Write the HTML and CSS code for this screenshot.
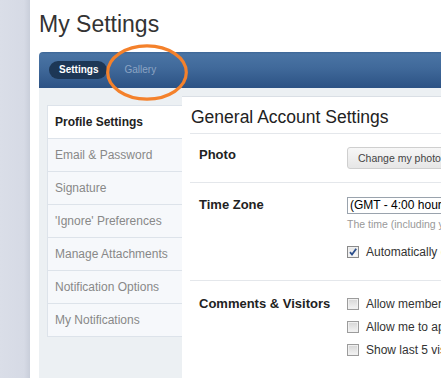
FILE: index.html
```html
<!DOCTYPE html>
<html>
<head>
<meta charset="utf-8">
<link rel="stylesheet" href="styles.css">
</head>
<body>
<div class="wrap">
  <div class="strip"></div>
  <div class="page">
    <h1 class="title">My Settings</h1>
    <div class="tabbar">
      <span class="tab active">Settings</span>
      <span class="tab">Gallery</span>
    </div>
    <div class="content">
      <div class="sidebar">
        <ul class="menu">
          <li class="item current">Profile Settings</li>
          <li class="item">Email &amp; Password</li>
          <li class="item">Signature</li>
          <li class="item">'Ignore' Preferences</li>
          <li class="item">Manage Attachments</li>
          <li class="item">Notification Options</li>
          <li class="item">My Notifications</li>
        </ul>
      </div>
      <div class="main">
        <h2 class="heading">General Account Settings</h2>
        <div class="row photo-row">
          <div class="label">Photo</div>
          <div class="field">
            <span class="button">Change my photo</span>
          </div>
        </div>
        <div class="row tz-row">
          <div class="label">Time Zone</div>
          <div class="field">
            <div class="select">(GMT - 4:00 hours) Atlantic Time (Canada), Caracas, La Paz</div>
            <div class="hint">The time (including your offset) is now shown</div>
            <div class="check first"><span class="box checked"><svg viewBox="0 0 12 12" width="12" height="12"><path d="M3 6.2 L5 8.6 L9.2 2.8" fill="none" stroke="#2c4f8c" stroke-width="1.8"/></svg></span>Automatically detect DST settings</div>
          </div>
        </div>
        <div class="row cv-row">
          <div class="label">Comments &amp; Visitors</div>
          <div class="field list">
            <div class="check"><span class="box"></span>Allow members to post comments on my profile</div>
            <div class="check"><span class="box"></span>Allow me to appear in the 'Recent Visitors' list</div>
            <div class="check"><span class="box"></span>Show last 5 visitors on my profile</div>
          </div>
        </div>
      </div>
    </div>
  </div>
</div>
<svg class="circle" width="90" height="64" viewBox="0 0 90 64">
  <ellipse cx="43" cy="30.5" rx="39.3" ry="26.6" fill="none" stroke="#f4812b" stroke-width="3.2"/>
</svg>
</body>
</html>
```

FILE: styles.css
```css
html, body {
  margin: 0;
  padding: 0;
  height: 378px;
  overflow: hidden;
  background: #fff;
  font-family: "Liberation Sans", Arial, sans-serif;
}
.wrap {
  display: flex;
  height: 378px;
}
.strip {
  width: 30px;
  flex: none;
  background: linear-gradient(to right, #dadee8 0, #d6dae5 80%, #c9ceda 100%);
}
.page {
  flex: 1;
  min-width: 0;
  padding-left: 9px;
  display: flex;
  flex-direction: column;
}
.title {
  margin: 0 0 14px 0;
  padding-top: 10px;
  font-size: 23px;
  line-height: 28px;
  font-weight: normal;
  color: #333;
  white-space: nowrap;
}
.tabbar {
  height: 36px;
  box-sizing: border-box;
  border-top-left-radius: 4px;
  background: linear-gradient(to bottom, #3d6696 0, #4a74a4 6%, #40699a 45%, #2c5284 100%);
  display: flex;
  align-items: center;
  padding-left: 10px;
  gap: 7px;
  flex: none;
}
.tab {
  font-size: 10px;
  line-height: 18px;
  height: 18px;
  padding: 0 9px 0 10px;
  color: #8ca4c3;
  white-space: nowrap;
}
.tab.active {
  background: #1d3756;
  color: #fff;
  font-weight: bold;
  border-radius: 9px;
  padding: 0 9px 0 10px;
}
.content {
  flex: 1;
  display: flex;
  background: #ecf0f3;
  padding-top: 8px;
}
.sidebar {
  width: 143px;
  flex: none;
  box-sizing: border-box;
  padding: 9px 0 0 8px;
}
.menu {
  list-style: none;
  margin: 0;
  padding: 0;
  width: 135px;
  border: 1px solid #dde3ea;
  border-top: none;
}
.item {
  height: 32px;
  line-height: 33px;
  border-top: 1px solid #dde3ea;
  background: #f6f8fb;
  color: #888;
  font-size: 12px;
  padding-left: 7px;
  white-space: nowrap;
}
.item.current {
  background: #fff;
  color: #222;
  font-weight: bold;
}
.main {
  flex: 1;
  min-width: 0;
  background: #fff;
  border-top: 1px solid #dadfe5;
  padding-left: 8px;
  overflow: hidden;
}
.heading {
  margin: 0;
  padding: 9px 0 5px 1px;
  font-size: 17.5px;
  line-height: 22px;
  font-weight: normal;
  color: #222;
  border-bottom: 1px solid #e4e7eb;
  white-space: nowrap;
}
.row {
  display: flex;
  border-bottom: 1px solid #e4e7eb;
  padding-left: 9px;
}
.label {
  width: 148px;
  flex: none;
  font-size: 13px;
  line-height: 16px;
  font-weight: bold;
  color: #222;
  white-space: nowrap;
}
.field {
  flex: 1;
  min-width: 0;
  white-space: nowrap;
}
.photo-row {
  padding-top: 13px;
  padding-bottom: 13px;
}
.button {
  display: inline-block;
  height: 22px;
  box-sizing: border-box;
  line-height: 20px;
  padding: 0 10px;
  font-size: 10.5px;
  color: #444;
  border: 1px solid #cfcfcf;
  border-radius: 3px;
  background: linear-gradient(to bottom, #f7f7f7, #e6e6e6);
}
.tz-row {
  padding-top: 14px;
  padding-bottom: 20px;
}
.select {
  height: 17px;
  box-sizing: border-box;
  border: 1px solid #9aa3ad;
  font-size: 12px;
  line-height: 15px;
  padding-left: 2px;
  color: #000;
  width: 320px;
  overflow: hidden;
}
.hint {
  margin-top: 4px;
  font-size: 10.5px;
  line-height: 12px;
  color: #999;
}
.check {
  display: flex;
  align-items: center;
  font-size: 12px;
  line-height: 16px;
  height: 16px;
  color: #333;
}
.check.first {
  margin-top: 14px;
}
.box {
  width: 12px;
  height: 12px;
  box-sizing: border-box;
  border: 1px solid #9c9c9c;
  background: linear-gradient(to bottom, #d6d6d6, #f4f4f4);
  box-shadow: inset 0 0 0 1px #f0f0f0;
  margin-right: 7px;
  flex: none;
  position: relative;
}
.box.checked {
  background: linear-gradient(to bottom, #e4e4e4, #fbfbfb);
  border-color: #8a8a8a;
}
.box svg {
  position: absolute;
  left: -1px;
  top: -1px;
}
.cv-row {
  padding-top: 15px;
  padding-bottom: 20px;
  border-bottom: none;
}
.list {
  display: flex;
  flex-direction: column;
  gap: 7px;
}
.circle {
  position: absolute;
  left: 104px;
  top: 42px;
}
```
